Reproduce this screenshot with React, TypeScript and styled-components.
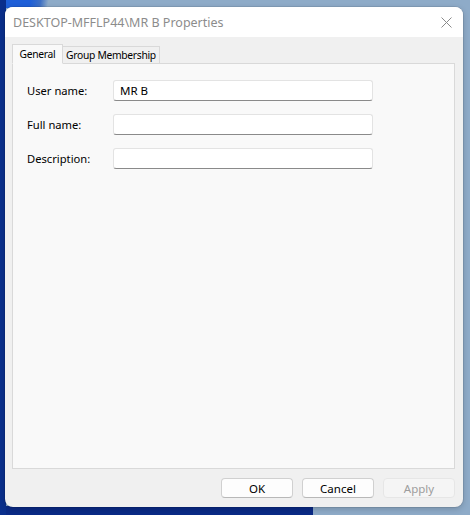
import styled, { createGlobalStyle } from "styled-components";

const GlobalStyle = createGlobalStyle`
  html, body {
    margin: 0;
    padding: 0;
  }
  body {
    width: 470px;
    height: 515px;
    overflow: hidden;
    font-family: "Noto Sans", "Segoe UI", sans-serif;
    background:
      linear-gradient(to right, #0a2f8c 0 6px, transparent 6px),
      linear-gradient(to top, #0a2a86 0 9px, transparent 9px) 0 0 / 313px 100% no-repeat,
      linear-gradient(100deg, #1e5fd8 0 30px, #3d6fc4 40px, transparent 48px) 0 0 / 100% 8px no-repeat,
      #8eabc8;
  }
`;

const Desktop = styled.div`
  padding: 7px 7px 8px 5px;
`;

const Window = styled.div`
  width: 458px;
  height: 500px;
  border-radius: 8px;
  background: #f0f0f0;
  box-shadow: 0 0 0 1px rgba(0, 0, 0, 0.08), 0 2px 6px rgba(0, 0, 0, 0.18);
  display: flex;
  flex-direction: column;
  overflow: hidden;
`;

const TitleBar = styled.div`
  height: 30px;
  background: #ffffff;
  display: flex;
  align-items: center;
  justify-content: space-between;
  padding: 0 10px 0 8px;
  flex-shrink: 0;
`;

const Title = styled.span`
  font-size: 12.5px;
  color: #8c8c8c;
`;

const CloseButton = styled.button`
  border: none;
  background: none;
  padding: 0;
  width: 14px;
  height: 14px;
  display: flex;
  align-items: center;
  justify-content: center;
`;

const Body = styled.div`
  flex: 1;
  display: flex;
  flex-direction: column;
  padding: 7px 8px 9px 7px;
`;

const TabStrip = styled.div`
  display: flex;
  align-items: flex-end;
  height: 19px;
  position: relative;
  z-index: 1;
`;

const Tab = styled.div<{ $active?: boolean }>`
  font-size: 10.3px;
  letter-spacing: -0.3px;
  white-space: nowrap;
  color: #000;
  border: 1px solid #d9d9d9;
  border-bottom: ${(p) => (p.$active ? "1px solid #f9f9f9" : "none")};
  background: ${(p) => (p.$active ? "#f9f9f9" : "#f0f0f0")};
  height: ${(p) => (p.$active ? "20px" : "17px")};
  padding: 0;
  display: flex;
  align-items: center;
  justify-content: center;
  box-sizing: border-box;
  margin-bottom: ${(p) => (p.$active ? "-1px" : "0")};
  ${(p) => (p.$active ? "width: 51px; padding-bottom: 1px;" : "margin-left: -1px; width: 98px;")}
`;

const Panel = styled.div`
  flex: 1;
  border: 1px solid #d9d9d9;
  background: #f9f9f9;
  padding: 16px 0 0 14px;
  display: flex;
  flex-direction: column;
  gap: 13px;
`;

const Row = styled.div`
  display: flex;
  align-items: center;
`;

const Label = styled.label`
  width: 86px;
  font-size: 11.2px;
  color: #000;
`;

const Field = styled.div`
  width: 260px;
  height: 21px;
  box-sizing: border-box;
  background: #fff;
  border: 1px solid #e3e3e3;
  border-bottom: 1px solid #8a8a8a;
  border-radius: 3px;
  font-size: 11.5px;
  display: flex;
  align-items: center;
  padding-left: 6px;
  color: #000;
`;

const ButtonRow = styled.div`
  display: flex;
  justify-content: flex-end;
  gap: 9px;
  margin-top: 9px;
`;

const DialogButton = styled.button<{ $disabled?: boolean }>`
  width: 72px;
  height: 20px;
  box-sizing: border-box;
  border: 1px solid ${(p) => (p.$disabled ? "#e6e6e6" : "#d0d0d0")};
  border-bottom-color: ${(p) => (p.$disabled ? "#e6e6e6" : "#b8b8b8")};
  border-radius: 4px;
  background: ${(p) => (p.$disabled ? "#f5f5f5" : "#fdfdfd")};
  color: ${(p) => (p.$disabled ? "#9d9d9d" : "#000")};
  font-family: "Noto Sans", sans-serif;
  font-size: 11.5px;
  padding: 0;
  display: flex;
  align-items: center;
  justify-content: center;
`;

const fields = [
  { label: "User name:", value: "MR B" },
  { label: "Full name:", value: "" },
  { label: "Description:", value: "" },
];

const App = () => {
  return (
    <>
      <GlobalStyle />
      <Desktop>
        <Window>
          <TitleBar>
            <Title>DESKTOP-MFFLP44\MR B Properties</Title>
            <CloseButton aria-label="Close">
              <svg width="11" height="11" viewBox="0 0 11 11">
                <path d="M0.5 0.5 L10.5 10.5 M10.5 0.5 L0.5 10.5" stroke="#8a8a8a" strokeWidth="1" />
              </svg>
            </CloseButton>
          </TitleBar>

          <Body>
            <TabStrip>
              <Tab $active>General</Tab>
              <Tab>Group Membership</Tab>
            </TabStrip>

            <Panel>
              {fields.map((f) => (
                <Row key={f.label}>
                  <Label>{f.label}</Label>
                  <Field>{f.value}</Field>
                </Row>
              ))}
            </Panel>

            <ButtonRow>
              <DialogButton>OK</DialogButton>
              <DialogButton>Cancel</DialogButton>
              <DialogButton $disabled>Apply</DialogButton>
            </ButtonRow>
          </Body>
        </Window>
      </Desktop>
    </>
  );
};

export default App;
